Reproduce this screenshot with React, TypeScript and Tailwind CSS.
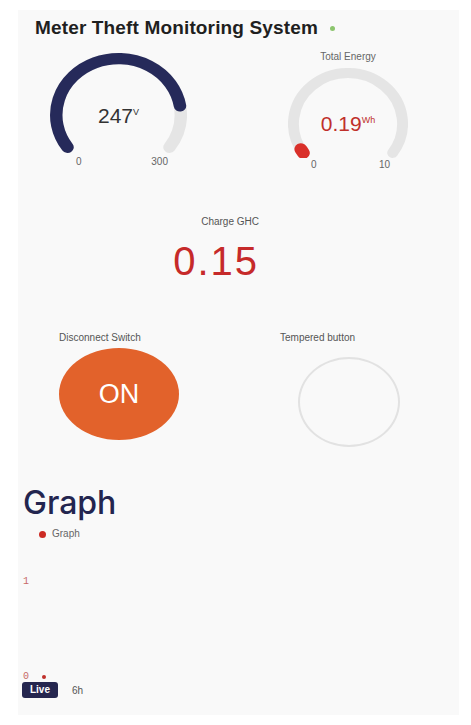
import React from 'react'

// Gauge arcs are drawn on a 200x200 circle (centre 100,100, r 80) and stretched
// into the box, the same way the dashboard widget squashes them.
const TRACK = 'M 34.5 145.9 A 80 80 0 1 1 165.5 145.9'

function Gauge({ valuePath, color, width, height, valueStroke = 16 }: {
  valuePath: string
  color: string
  width: number
  height: number
  valueStroke?: number
}) {
  return (
    <svg
      width={width}
      height={height}
      viewBox="12 12 176 142"
      preserveAspectRatio="none"
      className="block"
    >
      <path d={TRACK} fill="none" stroke="#e5e5e5" strokeWidth={16} strokeLinecap="round" />
      <path d={valuePath} fill="none" stroke={color} strokeWidth={valueStroke} strokeLinecap="round" />
    </svg>
  )
}

export default function App() {
  return (
    <div
      className="w-[471px] h-[725px] bg-white pl-[18px] pt-[10px]"
      style={{ fontFamily: '"Liberation Sans", Arial, sans-serif' }}
    >
      <div className="w-[441px] h-[705px] bg-[#f9f9f9] flex flex-col">
        {/* header */}
        <div className="mt-[7px] pl-[17px] flex items-center gap-[12px]">
          <h1 className="text-[19px] leading-[22px] font-bold tracking-[0.15px] text-[#1f1f1f]">
            Meter Theft Monitoring System
          </h1>
          <span className="w-[5px] h-[5px] rounded-full bg-[#8cc56e]" />
        </div>

        {/* gauges */}
        <div className="mt-[12px] flex items-start">
          <div className="ml-[32px] pt-[2px] w-[137px]">
            <div className="relative w-[137px] h-[100px]">
              <Gauge
                valuePath="M 34.5 145.9 A 80 80 0 1 1 179.0 87.2"
                color="#262a5a"
                width={137}
                height={100}
              />
              <div className="absolute left-0 right-0 top-[52px] text-center leading-[22px] text-[21px] text-[#333]">
                247<span className="text-[9px] relative top-[-8px]">V</span>
              </div>
            </div>
            <div className="mt-[3px] flex text-[10px] leading-[12px] text-[#666]">
              <span className="ml-[26px]">0</span>
              <span className="ml-auto mr-[19px]">300</span>
            </div>
          </div>

          <div className="ml-[101px] w-[120px]">
            <div className="text-center text-[10px] leading-[12px] text-[#666]">Total Energy</div>
            <div className="relative mt-[5px] w-[120px] h-[90px]">
              <Gauge
                valuePath="M 34.5 145.9 A 80 80 0 0 1 30.9 140.3"
                color="#d9302a"
                width={120}
                height={90}
                valueStroke={19}
              />
              <div className="absolute left-0 right-0 top-[45px] text-center leading-[22px] text-[21px] text-[#c0302b]">
                0.19<span className="text-[9px] relative top-[-8px]">Wh</span>
              </div>
            </div>
            <div className="mt-[1px] flex text-[10px] leading-[12px] text-[#666]">
              <span className="ml-[23px]">0</span>
              <span className="ml-auto mr-[18px]">10</span>
            </div>
          </div>
        </div>

        {/* charge */}
        <div className="mt-[45px] w-[241px] text-right">
          <div className="text-[10px] leading-[12px] text-[#555]">Charge GHC</div>
          <div className="mt-[13px] text-[40px] leading-[40px] tracking-[2px] text-[#c62a2a]">0.15</div>
        </div>

        {/* switches */}
        <div className="mt-[51px] flex items-start">
          <div className="ml-[41px]">
            <div className="text-[10px] leading-[12px] text-[#555]">Disconnect Switch</div>
            <div className="mt-[4px] w-[120px] h-[92px] rounded-[50%] bg-[#e2622b] flex items-center justify-center text-white text-[27px]">
              ON
            </div>
          </div>
          <div className="ml-[101px]">
            <div className="text-[10px] leading-[12px] text-[#555]">Tempered button</div>
            <div className="mt-[13px] ml-[18px] w-[102px] h-[90px] rounded-[50%] border-2 border-[#e2e2e2]" />
          </div>
        </div>

        {/* graph */}
        <h2
          className="mt-[38px] ml-[5px] text-[32px] leading-[36px] font-medium text-[#23254f]"
          style={{ fontFamily: 'Inter, "Liberation Sans", sans-serif' }}
        >
          Graph
        </h2>
        <div className="mt-[7px] ml-[21px] flex items-center gap-[6px] text-[10px] leading-[12px] text-[#666]">
          <span className="w-[7px] h-[7px] rounded-full bg-[#cc2b24]" />
          Graph
        </div>
        <div
          className="mt-[36px] ml-[5px] text-[10px] leading-[12px] text-[#c86a66]"
          style={{ fontFamily: '"Liberation Mono", monospace' }}
        >
          1
        </div>
        <div className="mt-[84px] ml-[5px] flex items-center h-[10px]">
          <span
            className="text-[10px] leading-[10px] text-[#c86a66]"
            style={{ fontFamily: '"Liberation Mono", monospace' }}
          >
            0
          </span>
          <span className="ml-[13px] w-[4px] h-[4px] rounded-full bg-[#c0302b]" />
        </div>
        <div className="ml-[4px] flex items-center">
          <button className="w-[36px] h-[16px] rounded-[3px] bg-[#25264f] text-white text-[10px] font-bold leading-[16px]">
            Live
          </button>
          <span className="ml-[14px] text-[10px] text-[#555]">6h</span>
        </div>
      </div>
    </div>
  )
}
